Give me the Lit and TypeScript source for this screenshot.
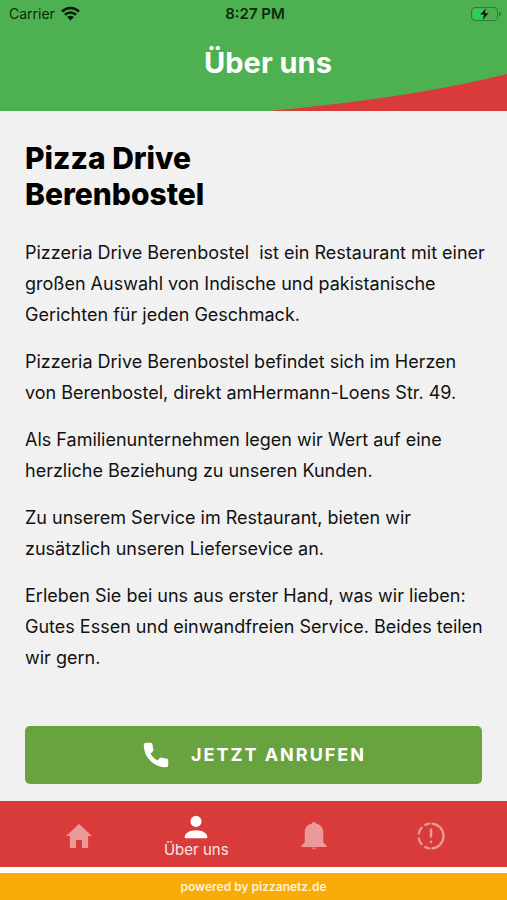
import { LitElement, html, svg, css } from "lit";
import { customElement, property } from "lit/decorators.js";

const icons = {
  home: svg`<path d="M208 448V320h96v128h97.600V256H464L256 64 48 256h62.400v192z"/>`,
  person: svg`<circle cx="256" cy="160" r="94"/><path d="M64 440v-16c0-64 86-112 192-112s192 48 192 112v16q0 6-6 6H70q-6 0-6-6z"/>`,
  bell: svg`<path d="M256 30c-17 0-29 10-33 24C150 72 108 122 108 190v170L56 408c-8 10-4 24 8 24h384c12 0 16-14 8-24l-52-48V190c0-68-42-118-115-136-4-14-16-24-33-24z"/><path opacity=".6" d="M212 440h88c-4 20-22 32-44 32s-40-12-44-32z"/>`,
  notice: svg`<g fill="none" stroke="currentColor" stroke-width="36" stroke-linecap="round"><path d="M276 57A200 200 0 0 1 276 455"/><path d="M226 58A200 200 0 0 0 163 79M105 125A200 200 0 0 0 60 215M60 297A200 200 0 0 0 105 387M163 433A200 200 0 0 0 226 454"/><path d="M256 152v112M256 346v6" stroke-width="40"/></g>`,
};
type IconName = keyof typeof icons;

@customElement("nav-tab")
class NavTab extends LitElement {
  @property() icon: IconName = "home";
  @property() label = "";
  @property({ type: Boolean }) active = false;

  static styles = css`
    :host {
      display: flex;
      flex: 1;
    }
    .tab {
      flex: 1;
      display: flex;
      flex-direction: column;
      align-items: center;
      justify-content: center;
      text-decoration: none;
      color: #eb9a9a;
      padding-top: 4px;
    }
    .active {
      color: #fff;
      padding-top: 2px;
    }
    .icon {
      width: 32px;
      height: 32px;
      fill: currentColor;
    }
    .active .icon {
      width: 30px;
      height: 30px;
    }
    .label {
      font-size: 15px;
      line-height: 16px;
      color: #fbe3e3;
    }
  `;

  render() {
    return html`<a
      class="tab ${this.active ? "active" : ""}"
      href="#${this.icon}"
      aria-label=${this.label}
    >
      <svg class="icon" viewBox="0 0 512 512" aria-hidden="true">${icons[this.icon]}</svg>
      ${this.active ? html`<span class="label">${this.label}</span>` : null}
    </a>`;
  }
}

@customElement("app-root")
class AppRoot extends LitElement {
  static styles = css`
    :host {
      display: flex;
      flex-direction: column;
      min-height: 100vh;
      background: #f1f1f1;
      color: #111;
      font-family: Inter, "Liberation Sans", sans-serif;
    }
    .header {
      position: relative;
      background: #4eb151;
      height: 111px;
      flex: none;
    }
    .swoosh {
      position: absolute;
      right: 0;
      bottom: 0;
      width: 47%;
      height: 37px;
      fill: #d83b3a;
    }
    .status {
      display: grid;
      grid-template-columns: 1fr auto 1fr;
      align-items: center;
      height: 27px;
      padding: 0 6px 0 9px;
      font-size: 14px;
      color: #0b2a0d;
    }
    .carrier {
      display: flex;
      align-items: center;
      gap: 6px;
    }
    .wifi {
      width: 19px;
      height: 15px;
    }
    .time {
      font-size: 15px;
      font-weight: 600;
    }
    .battery {
      justify-self: end;
      width: 31px;
      height: 16px;
    }
    .title {
      margin: 0;
      padding: 18px 0 0 29px;
      text-align: center;
      font-size: 29px;
      line-height: 36px;
      font-weight: 700;
      color: #fff;
    }
    .content {
      flex: 1;
      display: flex;
      flex-direction: column;
      padding: 29px 25px 17px;
    }
    .name {
      margin: 0 0 25px;
      max-width: 240px;
      font-size: 30px;
      line-height: 36px;
      font-weight: 800;
      color: #000;
    }
    .text {
      margin: 0 -8px 16px 0;
      font-size: 18px;
      line-height: 31px;
    }
    .call {
      display: flex;
      align-items: center;
      justify-content: center;
      gap: 20px;
      height: 58px;
      margin-top: auto;
      padding: 0;
      border: 0;
      border-radius: 5px;
      background: #69a33f;
      color: #fff;
      font: 700 18px/24px Inter, "Liberation Sans", sans-serif;
      letter-spacing: 2px;
    }
    .phone {
      width: 30px;
      height: 30px;
      fill: currentColor;
    }
    .tabs {
      display: flex;
      height: 66px;
      padding: 0 17px 0 20px;
      background: #d83b3a;
      border-bottom: 6px solid #fffdf8;
    }
    .powered {
      background: #f9ab0a;
      text-align: center;
      font-size: 12px;
      line-height: 27px;
      font-weight: 600;
    }
    .link {
      color: #fff3d6;
      text-decoration: none;
    }
  `;

  render() {
    return html`
      <header class="header">
        <svg class="swoosh" viewBox="0 0 233 37" preserveAspectRatio="none" aria-hidden="true">
          <path d="M0 37Q140 24 233 0V37z" />
        </svg>
        <div class="status">
          <span class="carrier"
            >Carrier
            <svg class="wifi" viewBox="0 0 19 15" aria-label="WLAN">
              <g fill="none" stroke="#061a07" stroke-width="2.600">
                <path d="M1 5.600C6 .7 13 .7 18 5.600" />
                <path d="M4 8.800C7.200 5.700 11.800 5.700 15 8.800" />
              </g>
              <path fill="#061a07" d="M6.200 11C8 9.300 11 9.300 12.800 11L9.500 14.400z" />
            </svg>
          </span>
          <span class="time">8:27 PM</span>
          <svg class="battery" viewBox="0 0 31 16" aria-label="Akku lädt">
            <rect x="1.500" y="1.500" width="26" height="13" rx="3.500" fill="none" stroke="#2f7d38" />
            <path fill="#2f7d38" d="M29 5.500q2 .6 2 2.500t-2 2.500z" />
            <rect x="3" y="3" width="12" height="10" rx="2" fill="#32cd62" />
            <path fill="#04140a" stroke="#4eb151" stroke-width=".6" d="M16.500 1.500L9.800 8.800h4l-1.600 5.700L19 7h-4z" />
          </svg>
        </div>
        <h1 class="title">Über uns</h1>
      </header>
      <main class="content">
        <h2 class="name">Pizza Drive Berenbostel</h2>
        <p class="text">
          Pizzeria Drive Berenbostel&nbsp; ist ein Restaurant mit einer großen Auswahl von Indische
          und pakistanische Gerichten für jeden Geschmack.
        </p>
        <p class="text">
          Pizzeria Drive Berenbostel befindet sich im Herzen von Berenbostel, direkt amHermann-Loens
          Str. 49.
        </p>
        <p class="text">
          Als Familienunternehmen legen wir Wert auf eine herzliche Beziehung zu unseren Kunden.
        </p>
        <p class="text">
          Zu unserem Service im Restaurant, bieten wir zusätzlich unseren Liefersevice an.
        </p>
        <p class="text">
          Erleben Sie bei uns aus erster Hand, was wir lieben: Gutes Essen und einwandfreien Service.
          Beides teilen wir gern.
        </p>
        <button class="call" type="button">
          <svg class="phone" viewBox="0 0 24 24" aria-hidden="true">
            <path
              stroke="currentColor"
              stroke-width="1.600"
              stroke-linejoin="round"
              d="M6.620 10.790c1.440 2.830 3.760 5.140 6.590 6.590l2.200-2.200c.27-.27.67-.36 1.020-.24 1.120.37 2.330.57 3.570.57.55 0 1 .45 1 1V20c0 .55-.45 1-1 1-9.390 0-17-7.610-17-17 0-.55.45-1 1-1h3.500c.55 0 1 .45 1 1 0 1.250.2 2.450.57 3.570.11.35.03.74-.25 1.020z"
            />
          </svg>
          JETZT ANRUFEN
        </button>
      </main>
      <nav class="tabs">
        <nav-tab icon="home" label="Start"></nav-tab>
        <nav-tab icon="person" label="Über uns" active></nav-tab>
        <nav-tab icon="bell" label="Mitteilungen"></nav-tab>
        <nav-tab icon="notice" label="Hinweise"></nav-tab>
      </nav>
      <footer class="powered"><a class="link" href="#pizzanetz">powered by pizzanetz.de</a></footer>
    `;
  }
}
